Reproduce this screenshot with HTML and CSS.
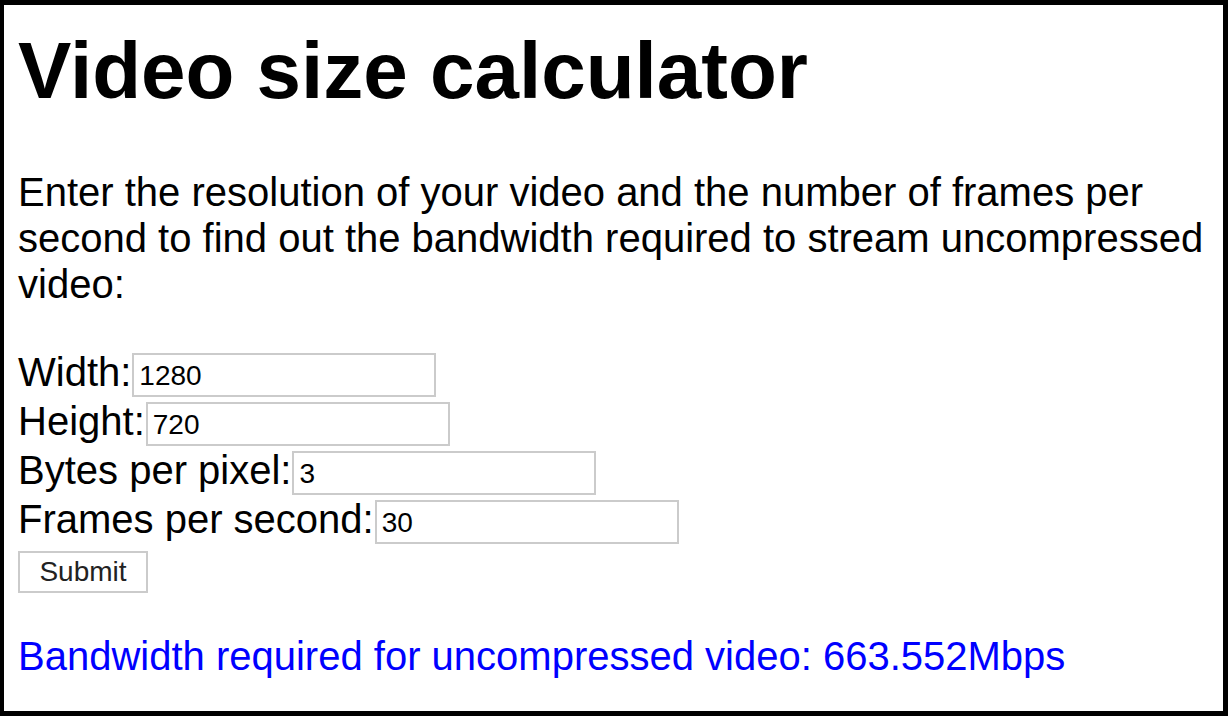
FILE: index.html
```html
<!DOCTYPE html>
<html lang="en">
<head>
<meta charset="utf-8">
<title>Video size calculator</title>
<link rel="stylesheet" href="styles.css">
</head>
<body>
<div class="frame">
  <h1 class="title">Video size calculator</h1>
  <p class="intro">Enter the resolution of your video and the number of frames per second to find out the bandwidth required to stream uncompressed video:</p>
  <form class="calc">
    <div class="row"><label class="lbl" for="w">Width:</label><input class="field" id="w" type="text" value="1280"></div>
    <div class="row"><label class="lbl" for="h">Height:</label><input class="field" id="h" type="text" value="720"></div>
    <div class="row"><label class="lbl" for="b">Bytes per pixel:</label><input class="field" id="b" type="text" value="3"></div>
    <div class="row"><label class="lbl" for="f">Frames per second:</label><input class="field" id="f" type="text" value="30"></div>
    <button class="submit" type="button">Submit</button>
  </form>
  <p class="result">Bandwidth required for uncompressed video: 663.552Mbps</p>
</div>
</body>
</html>
```
FILE: styles.css
```css
html, body {
  margin: 0;
  padding: 0;
  background: #fff;
}
.frame {
  box-sizing: border-box;
  width: 1228px;
  height: 716px;
  border-style: solid;
  border-color: #000;
  border-width: 5px 5px 5px 4px;
  padding: 0 0 0 14px;
  font-family: "Liberation Sans", Arial, Helvetica, sans-serif;
  color: #000;
  overflow: hidden;
}
.title {
  font-size: 80px;
  font-weight: bold;
  line-height: 92px;
  margin: 20px 0 52px;
}
.intro {
  font-size: 40px;
  line-height: 46px;
  margin: 0 0 43px;
}
.calc {
  margin: 0;
}
.row {
  display: flex;
  align-items: center;
  height: 49px;
}
.lbl {
  font-size: 40px;
  line-height: 46px;
  margin: 0 1px 5px 0;
}
.field {
  box-sizing: border-box;
  width: 304px;
  height: 44px;
  border: 2px solid #cbcbcb;
  padding: 2px 5px 0;
  margin: 0;
  font-family: "Liberation Sans", Arial, Helvetica, sans-serif;
  font-size: 28px;
  color: #000;
  background: #fff;
  outline: none;
}
.submit {
  display: block;
  box-sizing: border-box;
  width: 130px;
  height: 42px;
  margin: 5px 0 0;
  padding: 0;
  border: 2px solid #cbcbcb;
  background: #fff;
  font-family: "Liberation Sans", Arial, Helvetica, sans-serif;
  font-size: 28px;
  color: #222;
}
.result {
  font-size: 40px;
  line-height: 46px;
  color: #0000ff;
  margin: 40px 0 0;
}
```
